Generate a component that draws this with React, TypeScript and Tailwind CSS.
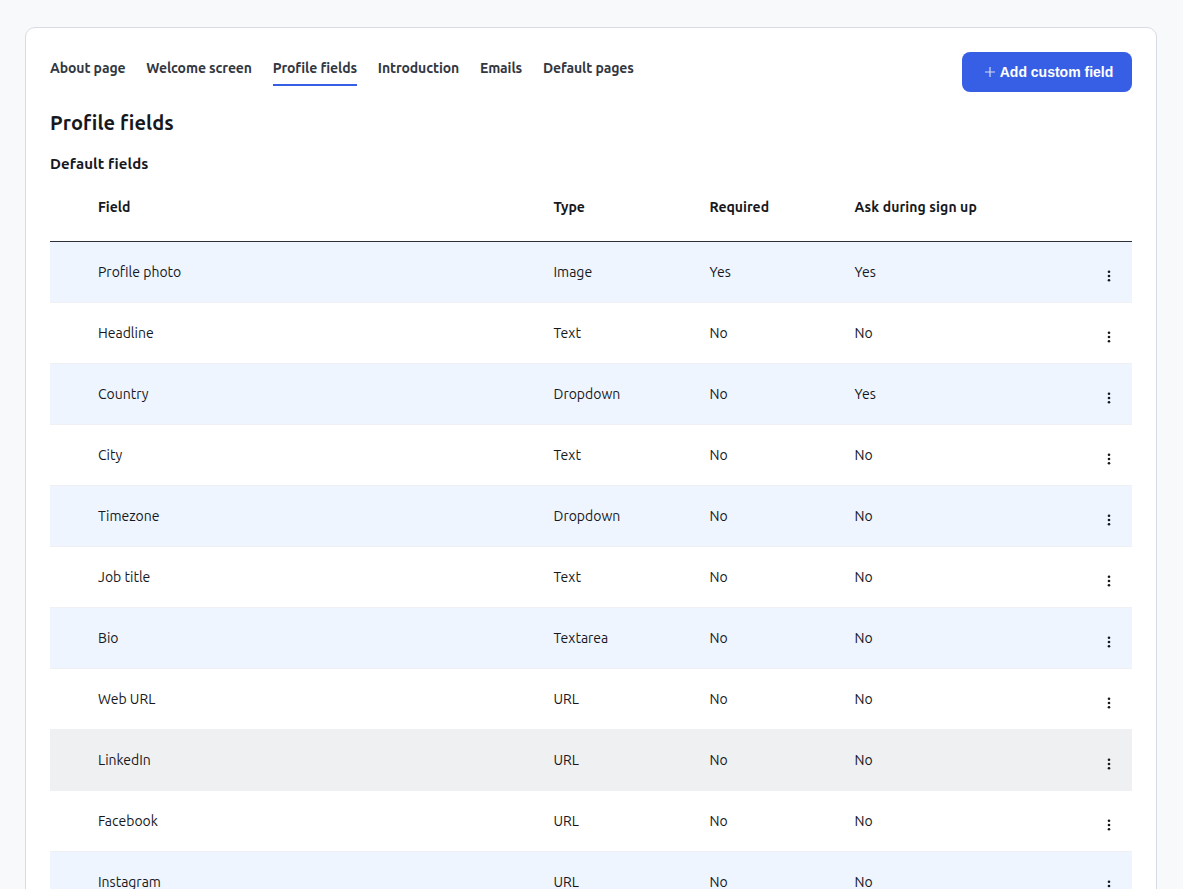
const tabs = ["About page", "Welcome screen", "Profile fields", "Introduction", "Emails", "Default pages"];
const rows: [string, string, string, string, string][] = [
  ["Profile photo", "Image", "Yes", "Yes", "bg-[#eef5ff]"],
  ["Headline", "Text", "No", "No", "bg-white"],
  ["Country", "Dropdown", "No", "Yes", "bg-[#eef5ff]"],
  ["City", "Text", "No", "No", "bg-white"],
  ["Timezone", "Dropdown", "No", "No", "bg-[#eef5ff]"],
  ["Job title", "Text", "No", "No", "bg-white"],
  ["Bio", "Textarea", "No", "No", "bg-[#eef5ff]"],
  ["Web URL", "URL", "No", "No", "bg-white"],
  ["LinkedIn", "URL", "No", "No", "bg-[#eff0f2]"],
  ["Facebook", "URL", "No", "No", "bg-white"],
  ["Instagram", "URL", "No", "No", "bg-[#eef5ff]"],
];

function Dots() {
  return (
    <svg width="16" height="16" viewBox="0 0 16 16" className="block" fill="#16181d">
      <circle cx="8" cy="3.8" r="1.3" />
      <circle cx="8" cy="8" r="1.3" />
      <circle cx="8" cy="12.2" r="1.3" />
    </svg>
  );
}

export default function App() {
  return (
    <div className="h-[889px] overflow-hidden bg-[#f8f9fb] pt-[27px] pr-[26px] pl-[25px] font-['Ubuntu','Noto_Sans',sans-serif] text-[14px] text-[#16181d]">
      <div className="rounded-t-[10px] border border-[#d8dbe1] bg-white px-6 pt-6 pb-6">
        <div className="flex items-start justify-between">
          <nav className="flex gap-[20.8px]">
            {tabs.map((t) => (
              <div
                key={t}
                className={`h-[34px] pt-[6px] text-[14px] leading-[20px] font-semibold tracking-[-0.1px] text-[#33373f] ${t === "Profile fields" ? "border-b-2 border-[#365fe6]" : ""}`}
              >
                {t}
              </div>
            ))}
          </nav>
          <button className="flex h-10 w-[170px] items-center justify-center gap-[4px] rounded-lg bg-[#365fe6] pl-[3px] font-['Liberation_Sans',sans-serif] text-[14px] font-bold text-white">
            <svg width="12" height="12" viewBox="0 0 12 12" stroke="#d5dcf8" strokeWidth="1.2" fill="none">
              <path d="M6 1v10M1 6h10" />
            </svg>
            Add custom field
          </button>
        </div>
        <h1 className="mt-[16px] text-[20px] leading-[30px] font-bold tracking-[0.1px]">Profile fields</h1>
        <h2 className="mt-[16px] text-[15px] leading-[20px] font-bold tracking-[0.1px]">Default fields</h2>
        <table className="w-full table-fixed border-collapse">
          <thead>
            <tr className="h-[67px] border-b border-[#2e3138] text-left">
              <th className="w-[503.5px] pl-12 align-middle font-bold">Field</th>
              <th className="w-[156px] font-bold">Type</th>
              <th className="w-[145px] font-bold">Required</th>
              <th className="font-bold tracking-[0.1px]">Ask during sign up</th>
              <th className="w-12"></th>
            </tr>
          </thead>
          <tbody>
            {rows.map(([field, type, req, ask, bg]) => (
              <tr key={field} className={`h-[61px] border-b border-[#eef0f3] ${bg}`}>
                <td className="pt-[2px] pl-12">{field}</td>
                <td className="pt-[2px]">{type}</td>
                <td className="pt-[2px]">{req}</td>
                <td className="pt-[2px]">{ask}</td>
                <td>
                  <div className="flex justify-center pt-[9px] pl-[2px]">
                    <Dots />
                  </div>
                </td>
              </tr>
            ))}
          </tbody>
        </table>
      </div>
    </div>
  );
}
